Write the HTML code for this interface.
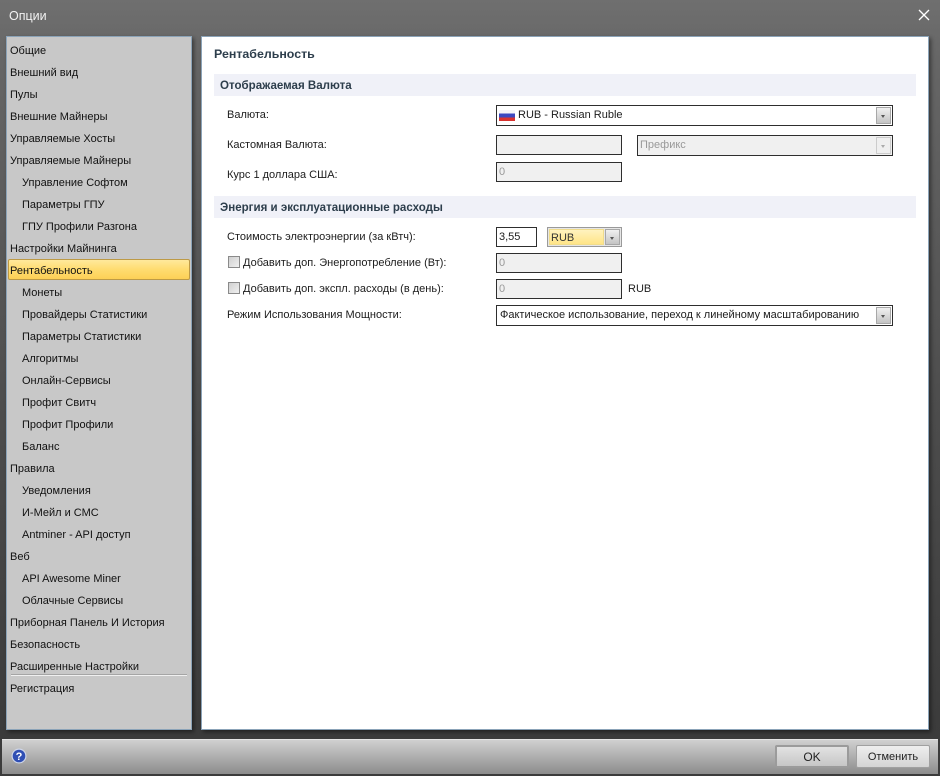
<!DOCTYPE html>
<html lang="ru">
<head>
<meta charset="utf-8">
<style>
html,body{margin:0;padding:0;width:940px;height:776px;overflow:hidden}
body{position:relative;font-family:"Liberation Sans",sans-serif;font-size:11px;color:#1c1c1c;background:linear-gradient(#6f6f6f 0,#666 60px,#4c4c4c 420px,#3b3b3b 736px)}
.a{position:absolute}
.t{position:absolute;white-space:nowrap;line-height:14px}
#left{left:6px;top:36px;width:184px;height:692px;background:#c8c8c8;border:1px solid #8ba3b8;box-shadow:2px 2px 4px rgba(0,0,0,.45)}
#right{left:201px;top:36px;width:726px;height:692px;background:#fff;border:1px solid #8ba3b8;box-shadow:2px 2px 4px rgba(0,0,0,.45)}
.n{position:absolute;white-space:nowrap;line-height:16px;left:10px;color:#111}
.s{left:22px}
.sec{position:absolute;left:214px;width:702px;height:22px;background:#f0f1f8;font-weight:bold;color:#2d3e4c;line-height:24px;text-indent:6px;font-size:11.55px}
.box{position:absolute;box-sizing:border-box;border:1px solid #2e2e2e;background:#f0f0f0;height:20px;line-height:18px;padding-left:2px;color:#999;white-space:nowrap;overflow:hidden}
.w{background:#fff;color:#1c1c1c}
.dd{position:absolute;box-sizing:border-box;width:15px;height:17px;border:1px solid #a8a8a8;background:linear-gradient(#f0f0f0,#c4c4c4)}
.dd:after{content:"";position:absolute;left:4px;top:7px;border-left:2.5px solid transparent;border-right:2.5px solid transparent;border-top:3px solid #555}
.dis{background:#efefef;border-color:#ccc}
.dis:after{border-top-color:#aaa}
.cb{position:absolute;box-sizing:border-box;left:228px;width:12px;height:12px;border:1px solid #8a8a8a;background:linear-gradient(135deg,#d0d0d0,#f0f0f0)}
.btn{position:absolute;top:745px;height:23px;box-sizing:border-box;text-align:center;line-height:21px;color:#222;border-radius:2px}
</style>
</head>
<body>
<div class="t" style="left:9px;top:9px;color:#f2f2f2;font-size:12.5px">Опции</div>
<svg class="a" style="left:918px;top:9px" width="12" height="12" viewBox="0 0 12 12"><path d="M1 1L11 11M11 1L1 11" stroke="#fff" stroke-width="1.3" fill="none"/></svg>

<div class="a" id="left"></div>
<div class="a" id="right"></div>

<div class="a" style="left:8px;top:259px;width:180px;height:19px;border:1px solid #bd9a46;border-radius:2px;background:linear-gradient(#ffe99c,#ffdc70 50%,#fdd056)"></div>

<div class="n" style="top:43px">Общие</div>
<div class="n" style="top:65px">Внешний вид</div>
<div class="n" style="top:87px">Пулы</div>
<div class="n" style="top:109px">Внешние Майнеры</div>
<div class="n" style="top:131px">Управляемые Хосты</div>
<div class="n" style="top:153px">Управляемые Майнеры</div>
<div class="n s" style="top:175px">Управление Софтом</div>
<div class="n s" style="top:197px">Параметры ГПУ</div>
<div class="n s" style="top:219px">ГПУ Профили Разгона</div>
<div class="n" style="top:241px">Настройки Майнинга</div>
<div class="n" style="top:263px">Рентабельность</div>
<div class="n s" style="top:285px">Монеты</div>
<div class="n s" style="top:307px">Провайдеры Статистики</div>
<div class="n s" style="top:329px">Параметры Статистики</div>
<div class="n s" style="top:351px">Алгоритмы</div>
<div class="n s" style="top:373px">Онлайн-Сервисы</div>
<div class="n s" style="top:395px">Профит Свитч</div>
<div class="n s" style="top:417px">Профит Профили</div>
<div class="n s" style="top:439px">Баланс</div>
<div class="n" style="top:461px">Правила</div>
<div class="n s" style="top:483px">Уведомления</div>
<div class="n s" style="top:505px">И-Мейл и СМС</div>
<div class="n s" style="top:527px">Antminer - API доступ</div>
<div class="n" style="top:549px">Веб</div>
<div class="n s" style="top:571px">API Awesome Miner</div>
<div class="n s" style="top:593px">Облачные Сервисы</div>
<div class="n" style="top:615px">Приборная Панель И История</div>
<div class="n" style="top:637px">Безопасность</div>
<div class="n" style="top:659px">Расширенные Настройки</div>
<div class="a" style="left:11px;top:674px;width:176px;height:1px;background:#f0f0f0;border-top:1px solid #a5a5a5"></div>
<div class="n" style="top:681px">Регистрация</div>

<div class="t" style="left:214px;top:47px;font-weight:bold;font-size:12.4px;color:#2d3e4c">Рентабельность</div>
<div class="sec" style="top:74px">Отображаемая Валюта</div>
<div class="sec" style="top:196px;line-height:25px">Энергия и эксплуатационные расходы</div>

<div class="t" style="left:227px;top:108px">Валюта:</div>
<div class="box w" style="left:496px;top:105px;width:397px;height:21px;padding-left:21px;line-height:18px">RUB - Russian Ruble</div>
<div class="a" style="left:499px;top:110px;width:16px;height:11px;background:linear-gradient(#f4f4f8 0,#f4f4f8 33%,#3b48c0 33%,#3b48c0 66%,#d8322e 66%)"></div>
<div class="dd" style="left:876px;top:107px"></div>

<div class="t" style="left:227px;top:138px">Кастомная Валюта:</div>
<div class="box" style="left:496px;top:135px;width:126px"></div>
<div class="box" style="left:637px;top:135px;width:256px;height:21px;padding-left:2px;line-height:19px">Префикс</div>
<div class="dd dis" style="left:876px;top:137px"></div>

<div class="t" style="left:227px;top:168px">Курс 1 доллара США:</div>
<div class="box" style="left:496px;top:162px;width:126px;line-height:19px">0</div>

<div class="t" style="left:227px;top:230px">Стоимость электроэнергии (за кВтч):</div>
<div class="box w" style="left:496px;top:227px;width:41px;line-height:19px">3,55</div>
<div class="a" style="left:547px;top:227px;width:75px;height:20px;box-sizing:border-box;border:1px solid #9a9a9a;background:#e6e6e6"></div>
<div class="a" style="left:549px;top:229px;width:55px;height:16px;box-sizing:border-box;border:1px solid #f0dc8c;background:linear-gradient(#fff3bf,#ffe587);line-height:16px;padding-left:1px;color:#333">RUB</div>
<div class="dd" style="left:605px;top:229px;height:16px"></div>

<div class="cb" style="top:256px"></div>
<div class="t" style="left:243px;top:256px">Добавить доп. Энергопотребление (Вт):</div>
<div class="box" style="left:496px;top:253px;width:126px;line-height:19px">0</div>

<div class="cb" style="top:282px"></div>
<div class="t" style="left:243px;top:282px">Добавить доп. экспл. расходы (в день):</div>
<div class="box" style="left:496px;top:279px;width:126px;line-height:19px">0</div>
<div class="t" style="left:628px;top:282px">RUB</div>

<div class="t" style="left:227px;top:308px">Режим Использования Мощности:</div>
<div class="box w" style="left:496px;top:305px;width:397px;height:21px;padding-left:3px">Фактическое использование, переход к линейному масштабированию</div>
<div class="dd" style="left:876px;top:307px"></div>

<div class="a" style="left:2px;top:739px;width:936px;height:35px;background:linear-gradient(#d0d0d0,#8c8c8c);border-top:1px solid #e4e4e4;box-sizing:border-box"></div>
<svg class="a" style="left:11px;top:748px" width="16" height="16" viewBox="0 0 16 16">
<circle cx="8" cy="8" r="7.5" fill="#cfd6e8"/><circle cx="8" cy="8" r="6.3" fill="#2f4fb4"/>
<text x="8" y="12" text-anchor="middle" font-family="Liberation Sans" font-weight="bold" font-size="11" fill="#fff">?</text></svg>
<div class="btn" style="left:775px;width:74px;border:2px solid #9b9b9b;background:linear-gradient(#e2e2e2,#c6c6c6);font-size:12px">OK</div>
<div class="btn" style="left:856px;width:74px;border:1px solid #a0a0a0;background:linear-gradient(#eee,#d4d4d4);line-height:23px;font-size:11px">Отменить</div>
</body>
</html>
